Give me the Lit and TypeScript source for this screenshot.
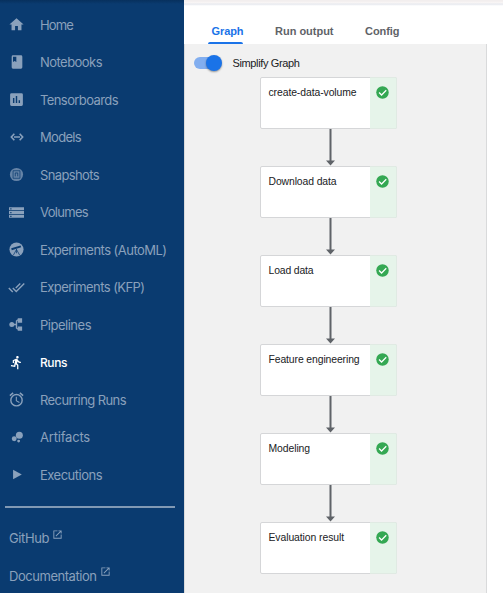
import { LitElement, html, css, svg } from "lit";
import { customElement } from "lit/decorators.js";
import { styleMap } from "lit/directives/style-map.js";
import { classMap } from "lit/directives/class-map.js";

const ctx = document.createElement("canvas").getContext("2d")!;

// Letter spacing that makes a label occupy the given width.
function fit(text: string, font: string, width: number): Record<string, string> {
  ctx.font = font;
  return { letterSpacing: ((width - ctx.measureText(text).width) / text.length).toFixed(3) + "px" };
}

const icons = {
  home: svg`<path d="M10 20v-6h4v6h5v-8h3L12 3 2 12h3v8z"/>`,
  book: svg`<path fill-rule="evenodd" d="M18 2H6a2 2 0 0 0-2 2v16a2 2 0 0 0 2 2h12a2 2 0 0 0 2-2V4a2 2 0 0 0-2-2zM6 4h5v8l-2.500-1.500L6 12z"/>`,
  chart: svg`<path fill-rule="evenodd" d="M19 3H5a2 2 0 0 0-2 2v14a2 2 0 0 0 2 2h14a2 2 0 0 0 2-2V5a2 2 0 0 0-2-2zM9 17H7v-7h2zm4 0h-2V7h2zm4 0h-2v-4h2z"/>`,
  ethernet: svg`<path d="M8 7 3.500 12 8 17M16 7l4.500 5-4.500 5" fill="none" stroke="currentColor" stroke-width="2.400"/><path d="M7.500 10.900h9v2.200h-9z"/>`,
  snapshot: svg`<circle cx="12" cy="12" r="10.500" opacity=".72"/><path d="M6.500 6h11v12h-11z" fill="none" stroke="#0a3b70" stroke-width="1.200"/><path d="M10 9.500v5.500m4-5.500v5.500M10 9.500h4" fill="none" stroke="#0a3b70" stroke-width="1.300"/>`,
  storage: svg`<path fill-rule="evenodd" d="M0 20.500h24v-5H0zM2 17h2v2H2zM0 3.500v5h24v-5zM4 7H2V5h2zM0 14.500h24v-5H0zM2 11h2v2H2z"/>`,
  automl: svg`<circle cx="12" cy="12" r="11.300"/><path d="m4 11.500 15-4.500" fill="none" stroke="#0a3b70" stroke-width="3.200"/><path d="M12 12l-5 9m5-9 5 9m-5-10v7" fill="none" stroke="#0a3b70" stroke-width="1.200"/>`,
  doneAll: svg`<path d="M18 7l-1.410-1.410-6.340 6.340 1.410 1.410zM22.240 5.590 11.660 16.170 7.480 12l-1.410 1.410L11.660 19l12-12zM.41 13.410 6 19l1.410-1.410L1.830 12z"/>`,
  pipeline: svg`<circle cx="4.500" cy="12" r="4"/><path d="M7 12h5m6-7h-4.500L12 6.500v11L13.500 19H18" fill="none" stroke="currentColor" stroke-width="2.200"/><path d="M14 2h7v7h-7zM14 15h7v7h-7z"/>`,
  run: svg`<path d="M13.490 5.480c1.100 0 2-.9 2-2s-.9-2-2-2-2 .9-2 2 .9 2 2 2zm-3.600 13.900 1-4.400 2.100 2v6h2v-7.500l-2.100-2 .6-3c1.300 1.500 3.300 2.500 5.500 2.500v-2c-1.900 0-3.500-1-4.300-2.400l-1-1.600c-.4-.6-1-1-1.700-1-.3 0-.5.1-.8.1l-5.200 2.200v4.700h2v-3.400l1.800-.7-1.600 8.100-4.900-1-.4 2z"/>`,
  alarm: svg`<path d="M22 5.720l-4.600-3.860-1.290 1.530 4.600 3.860zM7.880 3.390 6.600 1.860 2 5.710l1.290 1.530zM12.500 8H11v6l4.750 2.850.75-1.230-4-2.370zM12 4a9 9 0 1 0 0 18 9 9 0 0 0 0-18zm0 16a7 7 0 1 1 0-14 7 7 0 0 1 0 14z"/>`,
  bubble: svg`<circle cx="7.200" cy="15" r="4.200"/><circle cx="14.800" cy="19" r="2.500"/><circle cx="16" cy="8.800" r="6"/>`,
  play: svg`<path d="M6.500 4.500v15l14-7.500z"/>`,
};

// label, icon, label width, icon size
const items: [string, keyof typeof icons, number, number][] = [
  ["Home", "home", 33, 17],
  ["Notebooks", "book", 62, 16],
  ["Tensorboards", "chart", 78, 17],
  ["Models", "ethernet", 41, 16],
  ["Snapshots", "snapshot", 59, 15],
  ["Volumes", "storage", 48, 15],
  ["Experiments (AutoML)", "automl", 126.5, 15],
  ["Experiments (KFP)", "doneAll", 104.5, 17],
  ["Pipelines", "pipeline", 51, 15],
  ["Runs", "run", 27, 15],
  ["Recurring Runs", "alarm", 86, 17],
  ["Artifacts", "bubble", 50, 14],
  ["Executions", "play", 62, 15],
];
const links: [string, number][] = [["GitHub", 40], ["Documentation", 87.5]];
const tabs: [string, number][] = [["Graph", 32], ["Run output", 58.5], ["Config", 34.5]];
const nodes: [string, number][] = [
  ["create-data-volume", 88],
  ["Download data", 68],
  ["Load data", 45],
  ["Feature engineering", 91],
  ["Modeling", 41.5],
  ["Evaluation result", 75.5],
];

@customElement("app-root")
export class AppRoot extends LitElement {
  static styles = css`
    :host { display: flex; width: 503px; height: 593px; overflow: hidden; background: #fff; }
    * { box-sizing: border-box; }
    svg { display: block; fill: currentColor; flex: none; }
    .side { width: 184px; flex: none; background: linear-gradient(#07305d, #0a3b70 4px); color: #8aa1bc; padding-top: 6px;
      font: 13px Inter, sans-serif; }
    .item { height: 37.5px; display: flex; align-items: center; white-space: nowrap; }
    .icon { width: 33px; margin-right: 7px; display: flex; justify-content: center; }
    .active { color: #fff; font-size: 12px; font-weight: 500; }
    .rule { height: 2px; background: #8199b4; margin: 12px 9px 12px 5px; }
    .link { height: 37.5px; display: flex; align-items: center; padding-left: 9px; white-space: nowrap; }
    .link svg { margin: -8px 0 0 3px; }
    .main { flex: 1; display: flex; flex-direction: column; font-family: "Liberation Sans", Arial, sans-serif; }
    .top { height: 6px; background: linear-gradient(#f2eeee 0 1px, #f9f7f7 3px, #e4e6ec 4px, #f4f5f8 5px, #fff); }
    .tabs { height: 38px; display: flex; padding-left: 24px; }
    .tab { font-size: 11px; font-weight: 700; color: #5f6368; line-height: 13px; padding-top: 19px;
      white-space: nowrap; margin-left: 3.5px; margin-right: 28px; display: flex; flex-direction: column; }
    .selected { color: #1a73e8; }
    .bar { height: 2.5px; width: 35px; margin: 3.5px 0 0 -3.5px; background: #1a73e8; border-radius: 2px 2px 0 0; }
    .panel { width: 303px; flex: 1; background: #f1f1f1; border: solid #d9dadb; border-width: 0 1px; }
    .switch { height: 33px; padding: 5px 0 0 9px; display: flex; align-items: center; color: #202124; font-size: 11px; white-space: nowrap; }
    .track { width: 27px; height: 12px; border-radius: 6px; background: #82aeef; display: flex; align-items: center; margin-right: 11.5px; }
    .knob { flex: none; width: 16px; height: 16px; margin-left: 12px; border-radius: 50%; background: #1a73e8; box-shadow: 0 1px 2px #0006; }
    .graph { width: 137px; margin-left: 75px; }
    .node { height: 52px; display: flex; border: 1px solid #d5d6d8; border-radius: 2px; background: #fff; color: #202124; }
    .name { flex: 1; padding: 8px 0 0 7.5px; font-size: 10.4px; line-height: 13px; white-space: nowrap; }
    .status { width: 27px; margin: -1px; background: #e6f4ea; border: 1px solid #e0eae3; border-left: 0; border-radius: 0 2px 2px 0; color: #34a853; padding: 7px 0 0 5px; }
    .arrow { margin-left: 66px; color: #5f6368; }
  `;

  render() {
    return html`
      <nav class="side">
        ${items.map(([label, icon, width, size]) => html`
          <div class=${classMap({ item: true, active: icon === "run" })}>
            <span class="icon"><svg width=${size} height=${size} viewBox="0 0 24 24">${icons[icon]}</svg></span>
            <span style=${styleMap(fit(label, icon === "run" ? "500 12px Inter" : "13px Inter", width))}>${label}</span>
          </div>`)}
        <div class="rule"></div>
        ${links.map(([label, width]) => html`
          <div class="link">
            <span style=${styleMap(fit(label, "13px Inter", width))}>${label}</span>
            <svg width="11" height="11" viewBox="0 0 24 24"><path d="M19 19H5V5h7V3H3v18h18v-9h-2zM14 3v2h3.590l-9.830 9.830 1.410 1.410L19 6.410V10h2V3z"/></svg>
          </div>`)}
      </nav>
      <main class="main">
        <div class="top"></div>
        <div class="tabs">
          ${tabs.map(([label, width], i) => html`
            <div class=${classMap({ tab: true, selected: i === 0 })}>
              <span style=${styleMap(fit(label, "bold 11px Liberation Sans", width))}>${label}</span>
              ${i === 0 ? html`<div class="bar"></div>` : ""}
            </div>`)}
        </div>
        <section class="panel">
          <div class="switch">
            <span class="track"><span class="knob"></span></span>
            <span style=${styleMap(fit("Simplify Graph", "11px Liberation Sans", 67))}>Simplify Graph</span>
          </div>
          <div class="graph">
            ${nodes.map(([label, width], i) => html`
              ${i ? html`<svg class="arrow" width="9" height="37" viewBox="0 0 9 37"><path d="M3.500 0h2v31.500H9L4.500 36.500 0 31.500h3.500z"/></svg>` : ""}
              <div class="node">
                <div class="name"><span style=${styleMap(fit(label, "10.4px Liberation Sans", width))}>${label}</span></div>
                <div class="status"><svg width="15" height="15" viewBox="0 0 24 24"><circle cx="12" cy="12" r="10"/><path d="m6.500 12 4 4 7.500-7.500" fill="none" stroke="#fff" stroke-width="2"/></svg></div>
              </div>`)}
          </div>
        </section>
      </main>`;
  }
}
